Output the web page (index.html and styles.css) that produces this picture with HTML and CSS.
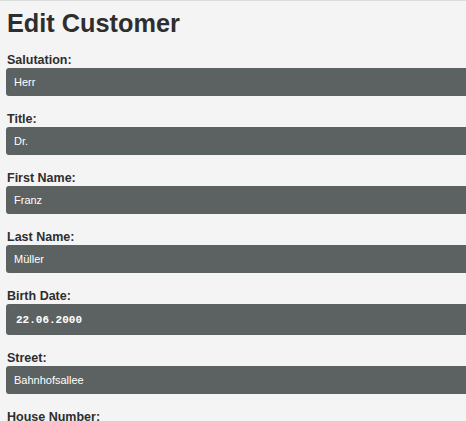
FILE: index.html
```html
<!DOCTYPE html>
<html lang="en">
<head>
<meta charset="utf-8">
<title>Edit Customer</title>
<link rel="stylesheet" href="styles.css">
</head>
<body>
<main class="page">
  <h1 class="title">Edit Customer</h1>
  <form class="form">
    <div class="field">
      <label class="label" for="salutation">Salutation:</label>
      <input class="input" id="salutation" type="text" value="Herr">
    </div>
    <div class="field">
      <label class="label" for="title">Title:</label>
      <input class="input" id="title" type="text" value="Dr.">
    </div>
    <div class="field">
      <label class="label" for="first">First Name:</label>
      <input class="input" id="first" type="text" value="Franz">
    </div>
    <div class="field">
      <label class="label" for="last">Last Name:</label>
      <input class="input" id="last" type="text" value="Müller">
    </div>
    <div class="field">
      <label class="label" for="birth">Birth Date:</label>
      <input class="input input-date" id="birth" type="text" value="22.06.2000">
    </div>
    <div class="field">
      <label class="label" for="street">Street:</label>
      <input class="input" id="street" type="text" value="Bahnhofsallee">
    </div>
    <div class="field">
      <label class="label" for="house">House Number:</label>
      <input class="input" id="house" type="text" value="12">
    </div>
  </form>
</main>
</body>
</html>
```

FILE: styles.css
```css
html {
  overflow: hidden;
}
body {
  margin: 0;
  background: #f4f4f4;
  border-top: 1px solid #dcdcdc;
  font-family: "Liberation Sans", Arial, sans-serif;
  color: #2e2e2e;
}
.page {
  padding: 0 0 0 6px;
}
.title {
  margin: 7px 0 0 1px;
  font-size: 25.3px;
  line-height: 30px;
  font-weight: bold;
}
.form {
  display: flex;
  flex-direction: column;
  gap: 16px;
  margin-top: 15px;
}
.field {
  display: flex;
  flex-direction: column;
}
.label {
  font-size: 12.5px;
  line-height: 15px;
  font-weight: bold;
  padding-left: 1px;
}
.input {
  box-sizing: border-box;
  width: 480px;
  height: 28px;
  margin: 0;
  border: none;
  border-radius: 3px;
  background: #5c6261;
  color: #ffffff;
  font-family: "Liberation Sans", Arial, sans-serif;
  font-size: 11px;
  padding: 0 0 0 8px;
  outline: none;
}
.input-date {
  height: 31px;
  font-family: "Liberation Mono", "Courier New", monospace;
  font-size: 11px;
  font-weight: bold;
  padding-left: 10px;
}
```
